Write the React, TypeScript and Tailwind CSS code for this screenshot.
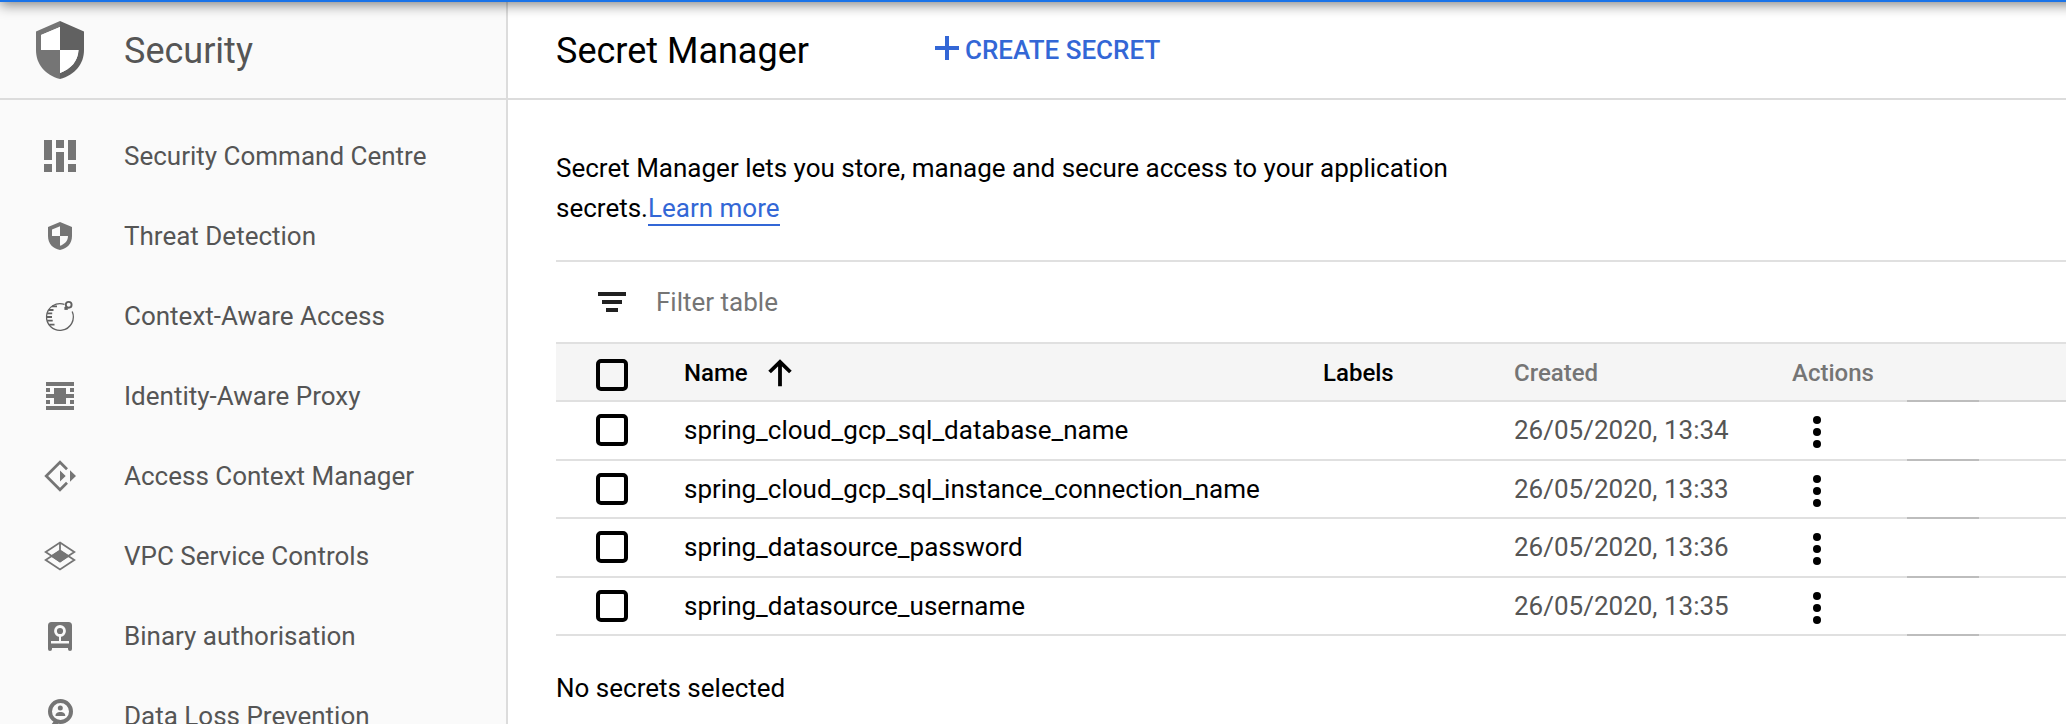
import React from "react";

const ICON = "h-12 w-12 shrink-0 fill-[#757575]";

/* Sidebar glyphs are drawn on a 48-unit canvas. */
const CommandCentreIcon = () => (
  <svg viewBox="0 0 48 48" className={ICON}>
    <path d="M8 8h8v20H8zM8 32h8v8H8zM20 8h8v8h-8zM20 20h8v20h-8zM32 8h8v20h-8zM32 32h8v8h-8z" />
  </svg>
);

const ThreatIcon = () => (
  <svg viewBox="0 0 48 48" className={ICON}>
    <path
      fillRule="evenodd"
      d="M24 10l12 5v9c0 8-5 12.500-12 14-7-1.500-12-6-12-14v-9zM24 14.200l-8 3.300V24h8zM24 24v9.800c4.500-1.500 8-4.800 8-9.800z"
    />
  </svg>
);

const ContextAccessIcon = () => (
  <svg viewBox="0 0 48 48" className="h-12 w-12 shrink-0 fill-none stroke-[#616161]">
    <path strokeWidth="1.300" d="M28.500 12.400A13.400 13.400 0 1 0 36.200 19.600" />
    <circle cx="32.700" cy="12.800" r="2.900" strokeWidth="1.900" />
    <path strokeWidth="3" d="M28.400 16.400h3.400" />
    <path
      strokeWidth="1.800"
      d="M16 14.400h5M13 18h4.500M11.200 21.400h5M10.700 25h5.300M11.200 28.700h5.500M13.200 32.600h5.300"
    />
  </svg>
);

const ProxyIcon = () => (
  <svg viewBox="0 0 48 48" className={ICON}>
    <path d="M10 10h28v4H10zM10 34h28v4H10zM10 22h28v4H10zM18 16h12v16H18zM10 16h4v4h-4zM34 16h4v4h-4zM10 28h4v4h-4zM34 28h4v4h-4z" />
  </svg>
);

const AccessManagerIcon = () => (
  <svg viewBox="0 0 48 48" className={ICON}>
    <path
      className="fill-none stroke-[#757575]"
      strokeWidth="2.700"
      d="M31 17.300L24 10.200 10.200 24 24 37.800l7-7.100"
    />
    <path d="M24 18.500l5.700 5.500-5.700 5.500zM34 18.200l6 5.800-6 5.800z" />
  </svg>
);

const VpcIcon = () => (
  <svg viewBox="0 0 48 48" className={ICON}>
    <path
      className="fill-none stroke-[#757575]"
      strokeWidth="1.800"
      d="M24 10.600L38.300 20 24 29.400 9.700 20zM24 18.500L38.300 28 24 37.400 9.700 28zM24 10.600V20"
    />
    <path d="M24 18l9.500 6L24 30.500 14.500 24z" />
  </svg>
);

const BinaryIcon = () => (
  <svg viewBox="0 0 48 48" className={ICON}>
    <path d="M15.500 10h17a3.500 3.500 0 0 1 3.500 3.500V37a2 2 0 0 1-4 0v-1H16v1a2 2 0 0 1-4 0V13.500A3.500 3.500 0 0 1 15.500 10z" />
    <circle cx="24" cy="19" r="4.500" className="fill-none stroke-[#fafafa]" strokeWidth="2.800" />
    <path className="fill-[#fafafa]" d="M23 24h2v5h8v2.500H15V29h8z" />
  </svg>
);

const LossIcon = () => (
  <svg viewBox="0 0 48 48" className={ICON}>
    <circle cx="24.500" cy="19.500" r="10.500" className="fill-none stroke-[#757575]" strokeWidth="4" />
    <circle cx="24.300" cy="16" r="2.500" />
    <path d="M19.500 24c0-3 2-4 4.900-4s4.900 1 4.900 4zM15 33l3-4h4v6h-7z" />
  </svg>
);

const NAV = [
  { label: "Security Command Centre", Icon: CommandCentreIcon },
  { label: "Threat Detection", Icon: ThreatIcon },
  { label: "Context-Aware Access", Icon: ContextAccessIcon },
  { label: "Identity-Aware Proxy", Icon: ProxyIcon },
  { label: "Access Context Manager", Icon: AccessManagerIcon },
  { label: "VPC Service Controls", Icon: VpcIcon },
  { label: "Binary authorisation", Icon: BinaryIcon },
  { label: "Data Loss Prevention", Icon: LossIcon },
];

const SECRETS = [
  { name: "spring_cloud_gcp_sql_database_name", created: "26/05/2020, 13:34", height: "h-[59px]" },
  { name: "spring_cloud_gcp_sql_instance_connection_name", created: "26/05/2020, 13:33", height: "h-[58px]" },
  { name: "spring_datasource_password", created: "26/05/2020, 13:36", height: "h-[59px]" },
  { name: "spring_datasource_username", created: "26/05/2020, 13:35", height: "h-[58px]" },
];

const COLUMNS =
  "grid grid-cols-[128px_639px_191px_278px_115px_72px_87px]";

const Checkbox = () => <div className="h-8 w-8 rounded-[5px] border-4 border-black" />;

const RowLine = ({ tail = "border-[#e0e0e0]" }: { tail?: string }) => (
  <>
    <div className="border-b-2 border-[#bdbdbd]" />
    <div className={`border-b-2 ${tail}`} />
  </>
);

const CELL = "flex border-b-2 border-[#e0e0e0]";

function Sidebar() {
  return (
    <aside className="flex w-[508px] shrink-0 flex-col border-r-2 border-[#dcdcdc] bg-[#fafafa] text-[#555]">
      <div className="flex h-[100px] shrink-0 items-center border-b-2 border-[#dcdcdc] pt-0.5 pl-9">
        <svg viewBox="0 0 48 58" className="h-[58px] w-12">
          <path fill="#757575" fillRule="evenodd" d="M24 0v6L5 14v15h19v29C9 54 0 43 0 29V10.500z" />
          <path fill="#616161" fillRule="evenodd" d="M24 0l24 10.500V29c0 14-9 25-24 29v-6c11-4 18-12 18.500-23H24z" />
          <path fill="#fff" d="M24 6v23H5V14zM24 29h18.500C42 40 35 48 24 52z" />
        </svg>
        <span className="pt-0.5 pl-10 text-[36px]">Security</span>
      </div>
      <nav className="flex flex-col pt-4">
        {NAV.map(({ label, Icon }) => (
          <div key={label} className="flex h-20 shrink-0 items-center pl-9">
            <Icon />
            <span className="pl-10 whitespace-nowrap">{label}</span>
          </div>
        ))}
      </nav>
    </aside>
  );
}

function SecretTable() {
  return (
    <section className="border-t-2 border-[#e0e0e0]">
      <div className="flex h-20 items-center pl-[42px] text-[#757575]">
        <svg viewBox="0 0 28 20" className="h-5 w-7 fill-[#212121]">
          <path d="M0 0h28v4H0zM4 8h20v4H4zM8 16h12v4H8z" />
        </svg>
        <span className="pl-[30px]">Filter table</span>
      </div>
      <div className={`${COLUMNS} h-[60px] border-t-2 border-[#e0e0e0] bg-[#f5f5f5] text-[24px] font-medium text-[#757575]`}>
        <div className={`${CELL} items-start pt-[15px] pl-10`}>
          <Checkbox />
        </div>
        <div className={`${CELL} items-center pt-0.5 text-black`}>
          Name
          <svg viewBox="0 0 24 28" className="ml-5 h-7 w-6 fill-none stroke-black" strokeWidth="3.800">
            <path d="M12 27.200V3M1.600 13L12 2.800 22.400 13" />
          </svg>
        </div>
        <div className={`${CELL} items-center pt-0.5 text-black`}>Labels</div>
        <div className={`${CELL} items-center pt-0.5`}>Created</div>
        <div className={`${CELL} items-center pt-0.5`}>Actions</div>
        <RowLine tail="border-[#d6d6d6]" />
      </div>
      {SECRETS.map((s) => (
        <div key={s.name} className={`${COLUMNS} ${s.height}`}>
          <div className={`${CELL} items-start pt-3 pl-10`}>
            <Checkbox />
          </div>
          <div className={`${CELL} items-center text-black`}>{s.name}</div>
          <div className={CELL} />
          <div className={`${CELL} items-center text-[#555]`}>{s.created}</div>
          <div className={`${CELL} items-start pt-3.5 pl-[21px]`}>
            <svg viewBox="0 0 8 32" className="h-8 w-2 fill-black">
              <circle cx="4" cy="4" r="4" />
              <circle cx="4" cy="16" r="4" />
              <circle cx="4" cy="28" r="4" />
            </svg>
          </div>
          <RowLine />
        </div>
      ))}
    </section>
  );
}

export default function App() {
  return (
    <div className="relative flex h-[724px] w-[2066px] overflow-hidden bg-white font-[Roboto,sans-serif] text-[26px] text-black">
      <Sidebar />
      <main className="flex min-w-0 grow flex-col">
        <header className="flex h-[100px] shrink-0 items-center border-b-2 border-[#dcdcdc] pt-0.5 pl-12">
          <h1 className="w-[379px] pt-0.5 text-[36px]">Secret Manager</h1>
          <div className="flex items-center font-medium text-[#3367d6]">
            <svg viewBox="0 0 24 24" className="mb-1 h-6 w-6 fill-[#3367d6]">
              <path d="M10 0h4v24h-4zM0 10h24v4H0z" />
            </svg>
            <span className="pl-1.5">CREATE SECRET</span>
          </div>
        </header>
        <div className="flex flex-col pt-12 pl-12">
          <p className="w-[900px] leading-10">
            Secret Manager lets you store, manage and secure access to your application secrets.
            <a className="border-b-2 border-[#3367d6] pb-px text-[#3367d6]">Learn more</a>
          </p>
          <div className="pt-8">
            <SecretTable />
          </div>
          <p className="pt-8 leading-10">No secrets selected</p>
        </div>
      </main>
      <div className="absolute -top-10 -right-10 left-0 h-[42px] bg-[#1a73e8] shadow-[0_3px_12px_rgba(0,0,0,0.48)]" />
    </div>
  );
}
